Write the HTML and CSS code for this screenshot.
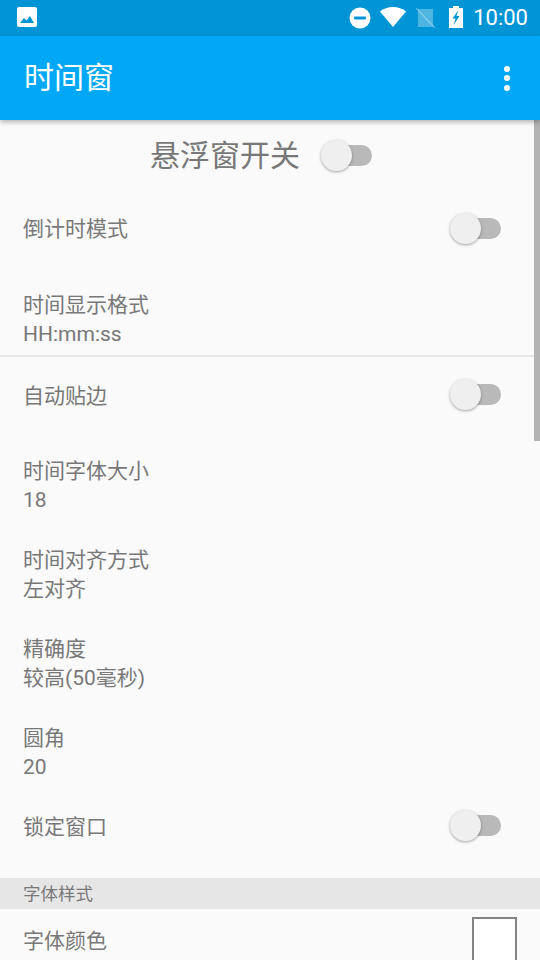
FILE: index.html
```html
<!DOCTYPE html>
<html lang="zh-CN">
<head>
<meta charset="utf-8">
<title>时间窗</title>
<link rel="stylesheet" href="styles.css">
</head>
<body>
<div class="screen">
  <div class="statusbar">
    <svg class="ic-image" viewBox="0 0 20 20"><path fill="#fff" d="M2 0h16a2 2 0 0 1 2 2v16a2 2 0 0 1-2 2H2a2 2 0 0 1-2-2V2a2 2 0 0 1 2-2z"/><path fill="#0295d6" d="M3 16l4-5 2.500 2.500L13 9l4 7z"/></svg>
    <div class="status-right">
      <svg class="ic-dnd" viewBox="0 0 22 22"><circle cx="11" cy="11" r="10.500" fill="#fff"/><rect x="5" y="9.500" width="12" height="3" rx="1" fill="#0295d6"/></svg>
      <svg class="ic-wifi" viewBox="0 0 26 20"><path fill="#fff" d="M13 20L0 4.500C3.500 1.700 8 0 13 0s9.500 1.700 13 4.500z"/></svg>
      <svg class="ic-sim" viewBox="0 0 20 20"><path fill="#fff" fill-opacity=".3" d="M2 1h15v18H2z"/><path stroke="#fff" stroke-opacity=".3" stroke-width="1.500" d="M0 0l19 20"/></svg>
      <svg class="ic-batt" viewBox="0 0 14 22"><path fill="#fff" d="M4 0h6v2h4v20H0V2h4z"/><path fill="#0295d6" d="M9.500 4L3.500 12.500h3L4.500 19 10.500 10h-3z"/></svg>
      <span class="clock">10:00</span>
    </div>
  </div>
  <header class="appbar">
    <h1 class="appbar-title">时间窗</h1>
    <div class="menu"><i></i><i></i><i></i></div>
  </header>
  <main class="content">
    <div class="master">
      <span class="master-label">悬浮窗开关</span>
      <span class="switch"></span>
    </div>
    <div class="row row-a"><span class="label">倒计时模式</span><span class="switch"></span></div>
    <div class="row-two"><div class="label">时间显示格式</div><div class="value">HH:mm:ss</div></div>
    <div class="divider"></div>
    <div class="row row-b"><span class="label">自动贴边</span><span class="switch"></span></div>
    <div class="stack">
      <div class="row-two"><div class="label">时间字体大小</div><div class="value">18</div></div>
      <div class="row-two"><div class="label">时间对齐方式</div><div class="value">左对齐</div></div>
      <div class="row-two"><div class="label">精确度</div><div class="value">较高(50毫秒)</div></div>
      <div class="row-two"><div class="label">圆角</div><div class="value">20</div></div>
    </div>
    <div class="row row-c"><span class="label">锁定窗口</span><span class="switch"></span></div>
    <div class="section">字体样式</div>
    <div class="row row-d"><span class="label">字体颜色</span><span class="swatch"></span></div>
  </main>
  <div class="scrollbar"></div>
</div>
</body>
</html>
```
FILE: styles.css
```css
* { box-sizing: border-box; }
html, body { margin: 0; padding: 0; }
body {
  font-family: Roboto, "Noto Sans CJK SC", sans-serif;
  background: #fafafa;
  color: #787878;
}
.screen {
  position: relative;
  width: 540px;
  height: 960px;
  overflow: hidden;
  display: flex;
  flex-direction: column;
}
.statusbar {
  height: 36px;
  flex: none;
  background: #0295d6;
  display: flex;
  align-items: center;
  justify-content: space-between;
  padding: 0 12px 0 17px;
}
.ic-image { width: 20px; height: 20px; display: block; margin-top: -2px; }
.status-right { display: flex; align-items: center; }
.ic-dnd { width: 22px; height: 22px; margin-right: 9px; }
.ic-wifi { width: 26px; height: 20px; margin-right: 10px; margin-top: -2px; }
.ic-sim { width: 20px; height: 20px; margin-right: 13px; }
.ic-batt { width: 14px; height: 22px; margin-right: 10px; margin-top: -2px; }
.clock { color: #fff; font-size: 22px; line-height: 36px; }
.appbar {
  position: relative;
  z-index: 2;
  height: 84px;
  flex: none;
  background: #02a8f5;
  box-shadow: 0 2px 5px rgba(0, 0, 0, .3);
  display: flex;
  align-items: center;
  justify-content: space-between;
  padding: 0 30px 0 24px;
}
.appbar-title {
  margin: 0;
  color: #fff;
  font-size: 30px;
  font-weight: 400;
  line-height: 84px;
}
.menu { display: flex; flex-direction: column; gap: 3.500px; }
.menu i { display: block; width: 6px; height: 6px; border-radius: 50%; background: #fff; }
.content { flex: 1; display: flex; flex-direction: column; }
.master {
  height: 72px;
  flex: none;
  display: flex;
  align-items: center;
  justify-content: center;
  gap: 21px;
  padding-right: 18px;
}
.master-label { font-size: 30px; line-height: 72px; }
.switch {
  position: relative;
  display: block;
  width: 51px;
  height: 31px;
  flex: none;
  margin-bottom: 2px;
}
.switch::before {
  content: "";
  position: absolute;
  left: 9px;
  top: 5px;
  width: 42px;
  height: 21px;
  border-radius: 11px;
  background: #b9b9b9;
}
.switch::after {
  content: "";
  position: absolute;
  left: 0;
  top: 0;
  width: 31px;
  height: 31px;
  border-radius: 50%;
  background: #efefef;
  box-shadow: 0 1px 3px rgba(0, 0, 0, .35);
}
.row {
  flex: none;
  display: flex;
  align-items: center;
  justify-content: space-between;
  padding: 0 39px 0 23px;
}
.row-a { height: 75px; }
.row-b { height: 76px; padding-top: 2px; }
.row-b .switch { margin-bottom: 4px; }
.row-c { height: 76px; margin-bottom: 13px; }
.row-c .switch { margin-bottom: 4px; }
.row-d { height: 64px; padding-right: 23px; }
.label, .value { font-size: 21px; line-height: 29px; }
.row-two {
  height: 89px;
  flex: none;
  padding: 24px 23px 0;
}
.divider { height: 2px; flex: none; background: #e6e6e6; margin-top: -1px; }
.section {
  height: 31px;
  flex: none;
  background: #e6e6e6;
  padding: 1px 0 0 23px;
  font-size: 17.500px;
  line-height: 30px;
}
.swatch {
  align-self: flex-start;
  margin-top: 8px;
  width: 45px;
  height: 54px;
  flex: none;
  background: #fff;
  border: 2px solid #848484;
}
.scrollbar {
  position: absolute;
  right: 0;
  top: 120px;
  width: 6px;
  height: 321px;
  background: #b3b3b3;
}
```
